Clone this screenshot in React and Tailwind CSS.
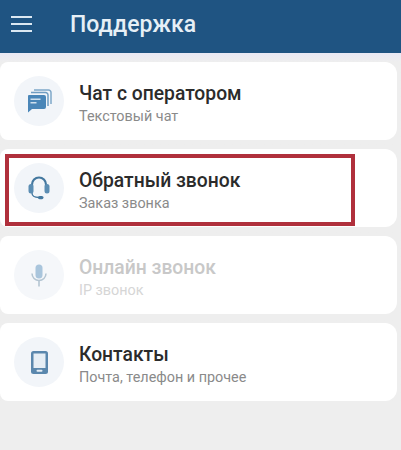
const items = [
  { title: "Чат с оператором", sub: "Текстовый чат", icon: <ChatIcon /> },
  { title: "Обратный звонок", sub: "Заказ звонка", icon: <HeadsetIcon />, marked: true },
  { title: "Онлайн звонок", sub: "IP звонок", icon: <MicIcon />, disabled: true },
  { title: "Контакты", sub: "Почта, телефон и прочее", icon: <PhoneIcon /> },
];

function ChatIcon() {
  return (
    <svg width="25" height="24" viewBox="0 0 25 24">
      <path d="M7 1h14.500a2.500 2.500 0 0 1 2.500 2.500V15" fill="none" stroke="#7fa8c9" strokeWidth="1.500" />
      <path d="M4 3.500h14.500a2.500 2.500 0 0 1 2.500 2.500v11" fill="none" stroke="#6f9dc2" strokeWidth="1.500" />
      <path d="M2 6h15a2 2 0 0 1 2 2v10a2 2 0 0 1-2 2H5l-4 3.500V7a1 1 0 0 1 1-1z" fill="#4a86b8" />
      <rect x="3.500" y="9.500" width="10" height="1.500" fill="#cfe0ee" />
      <rect x="3.500" y="13" width="6" height="1.500" fill="#cfe0ee" />
    </svg>
  );
}

function HeadsetIcon() {
  return (
    <svg width="22" height="24" viewBox="0 0 22 24">
      <path d="M4 10V8.500a7 7 0 0 1 14 0V10" fill="none" stroke="#44789f" strokeWidth="2.200" />
      <rect x="0.500" y="8" width="5" height="9.500" rx="2.500" fill="#5b8db3" />
      <rect x="16.500" y="8" width="5" height="9.500" rx="2.500" fill="#5b8db3" />
      <path d="M4 17c0 3 2.500 4.500 7 4.500" fill="none" stroke="#44789f" strokeWidth="1.300" />
      <rect x="10" y="20" width="5.500" height="3.200" rx="1.600" fill="#44789f" />
    </svg>
  );
}

function MicIcon() {
  return (
    <svg width="16" height="23" viewBox="0 0 16 23">
      <rect x="4.500" y="0.500" width="7" height="14" rx="3.500" fill="#a9c5dc" />
      <path d="M1 9.500a7 7 0 0 0 14 0" fill="none" stroke="#b4c5d2" strokeWidth="1.500" />
      <path d="M8 16.500v6" stroke="#b4c5d2" strokeWidth="1.600" />
    </svg>
  );
}

function PhoneIcon() {
  return (
    <svg width="17" height="23" viewBox="0 0 17 23">
      <rect x="0" y="0" width="17" height="23" rx="2.500" fill="#5a87ad" />
      <rect x="2.500" y="2.500" width="12" height="14.500" fill="#e6eef5" />
      <rect x="5.500" y="18.800" width="6" height="2" rx="1" fill="#e6eef5" />
    </svg>
  );
}

function Row({ item }) {
  return (
    <div className="relative flex h-[78px] w-[397px] items-center rounded-r-xl rounded-l-lg bg-white pl-[14px]">
      <div className={`flex h-[50px] w-[50px] items-center justify-center rounded-full ${item.disabled ? "bg-[#f5f7fa]" : "bg-[#f2f5f9]"}`}>
        {item.icon}
      </div>
      <div className="ml-[15px] flex flex-col pt-[6px]">
        <span className={`text-[19.300px] leading-[24px] font-medium ${item.disabled ? "text-[#c8c8c8]" : "text-[#2b2b2b]"}`}>
          {item.title}
        </span>
        <span className={`text-[14.400px] leading-[21px] ${item.disabled ? "text-[#d6d6d6]" : "text-[#8a8a8a]"}`}>
          {item.sub}
        </span>
      </div>
      {item.marked && (
        <div className="absolute top-[5px] left-[5px] h-[72px] w-[350px] border-4 border-[#b0303c]" />
      )}
    </div>
  );
}

export default function App() {
  return (
    <div className="flex h-[450px] w-[401px] flex-col overflow-hidden bg-[#eeeeee] font-['Roboto',sans-serif]">
      <header className="flex h-[53px] shrink-0 items-center bg-[#1f5482] pb-[3px] pl-[11px]">
        <div className="mb-[2px] flex w-[21px] flex-col gap-[5px]">
          <span className="h-[2px] bg-[#dbe8f2]" />
          <span className="h-[2px] bg-[#dbe8f2]" />
          <span className="h-[2px] bg-[#dbe8f2]" />
        </div>
        <h1 className="ml-[38px] text-[23px] font-medium text-[#e6eff6]">Поддержка</h1>
      </header>
      <div className="flex flex-col gap-[9px] bg-gradient-to-b from-[#e9e9f5] to-[#eeeeee] to-[9px] pt-[9px]">
        {items.map((item) => (
          <Row key={item.title} item={item} />
        ))}
      </div>
    </div>
  );
}
